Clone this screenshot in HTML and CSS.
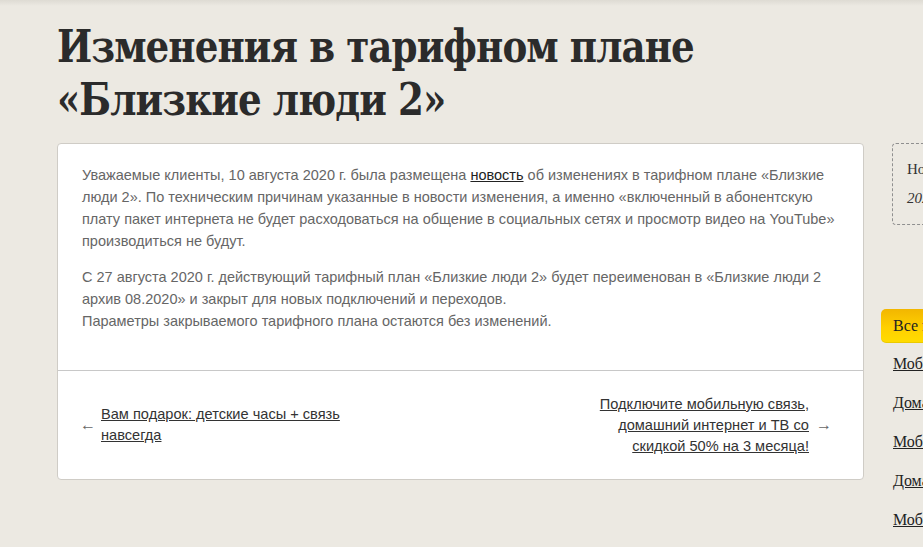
FILE: index.html
```html
<!DOCTYPE html>
<html lang="ru">
<head>
<meta charset="utf-8">
<title>Изменения в тарифном плане «Близкие люди 2»</title>
<link rel="stylesheet" href="styles.css">
</head>
<body>
<div class="page">
  <h1 class="title"><span class="title-text">Изменения в тарифном плане<br>«Близкие люди 2»</span></h1>
  <div class="layout">
    <main class="card">
      <div class="card-body">
        <p>Уважаемые клиенты, 10 августа 2020 г. была размещена <a href="#">новость</a> об изменениях в тарифном плане «Близкие люди 2». По техническим причинам указанные в новости изменения, а именно «включенный в абонентскую плату пакет интернета не будет расходоваться на общение в социальных сетях и просмотр видео на YouTube» производиться не будут.</p>
        <p>С 27 августа 2020 г. действующий тарифный план «Близкие люди 2» будет переименован в «Близкие люди 2 архив 08.2020» и закрыт для новых подключений и переходов.<br>Параметры закрываемого тарифного плана остаются без изменений.</p>
      </div>
      <nav class="card-nav">
        <div class="nav-item nav-prev">
          <span class="arrow">←</span>
          <a href="#">Вам подарок: детские часы + связь навсегда</a>
        </div>
        <div class="nav-item nav-next">
          <a href="#">Подключите мобильную связь, домашний интернет и ТВ со скидкой 50% на 3 месяца!</a>
          <span class="arrow">→</span>
        </div>
      </nav>
    </main>
    <aside class="sidebar">
      <div class="info-box">
        <div class="info-title">Новости</div>
        <div class="info-date">2020</div>
      </div>
      <div class="filters">
        <div class="filter-btn">Все новости</div>
        <a class="filter-link" href="#">Мобильная связь</a>
        <a class="filter-link" href="#">Домашний интернет</a>
        <a class="filter-link" href="#">Мобильный интернет</a>
        <a class="filter-link" href="#">Домашнее ТВ</a>
        <a class="filter-link" href="#">Мобильное ТВ</a>
      </div>
    </aside>
  </div>
</div>
</body>
</html>
```
FILE: styles.css
```css
html, body {
  margin: 0;
  padding: 0;
}
body {
  background: #ece9e2;
  background-image: linear-gradient(to bottom, #dedbd3 0, #ece9e2 6px);
  background-repeat: no-repeat;
  font-family: "Liberation Sans", Arial, sans-serif;
  overflow: hidden;
  height: 547px;
}
.page {
  padding: 20px 0 0 57px;
  width: 1100px;
}
.title {
  margin: 0 0 17px 0;
  font-family: "DejaVu Serif Condensed", "DejaVu Serif", serif;
  font-weight: bold;
  font-size: 45px;
  line-height: 53px;
  letter-spacing: -1px;
  color: #2b2b2b;
  white-space: nowrap;
}
.title-text {
  display: inline-block;
  transform: scaleX(0.92);
  transform-origin: left top;
}
.layout {
  display: flex;
  align-items: flex-start;
  gap: 17px;
}
.card {
  width: 805px;
  background: #fff;
  border: 1px solid #cfccc6;
  border-radius: 4px;
  flex-shrink: 0;
}
.card-body {
  padding: 20px 18px 24px 24px;
  border-bottom: 1px solid #c8c8c8;
}
.card-body p {
  margin: 0 0 14px 0;
  font-size: 14.5px;
  line-height: 22px;
  color: #666;
}
.card-body a {
  color: #222;
  text-decoration: underline;
}
.card-nav {
  display: flex;
  justify-content: space-between;
  align-items: center;
  height: 108px;
  padding: 0 31px 0 22px;
}
.nav-item {
  display: flex;
  align-items: center;
  font-size: 14.6px;
  line-height: 21px;
}
.nav-item a {
  color: #333;
  text-decoration: underline;
}
.nav-prev a {
  max-width: 250px;
  margin-left: 5px;
}
.nav-next a {
  max-width: 220px;
  text-align: right;
  margin-right: 7px;
}
.arrow {
  color: #666;
  font-size: 16px;
  line-height: 16px;
}
.sidebar {
  width: 200px;
  flex-shrink: 0;
}
.info-box {
  margin-left: 11px;
  border: 1px dashed #8f8f8f;
  border-radius: 4px;
  padding: 14px 14px 16px 14px;
  height: 50px;
  font-family: "Liberation Serif", "DejaVu Serif", serif;
  font-size: 15px;
  color: #333;
}
.info-title {
  line-height: 22px;
  margin-bottom: 8px;
}
.info-date {
  font-style: italic;
  line-height: 20px;
}
.filters {
  margin-top: 84px;
  display: flex;
  flex-direction: column;
}
.filter-btn {
  align-self: flex-start;
  box-sizing: border-box;
  height: 34px;
  line-height: 34px;
  padding: 0 14px 0 12px;
  background: linear-gradient(to bottom, #f2b600 0%, #ffd000 55%, #ffdc00 100%);
  border-radius: 5px;
  font-family: "Liberation Serif", "DejaVu Serif", serif;
  font-size: 16px;
  color: #222;
  box-shadow: inset 0 -1px 0 rgba(0,0,0,0.08);
}
.filter-link {
  margin-left: 12px;
  margin-top: 13px;
  height: 26px;
  line-height: 26px;
  font-family: "Liberation Serif", "DejaVu Serif", serif;
  font-size: 16px;
  color: #222;
  text-decoration: underline;
  white-space: nowrap;
}
.filter-btn + .filter-link {
  margin-top: 8px;
}
```
